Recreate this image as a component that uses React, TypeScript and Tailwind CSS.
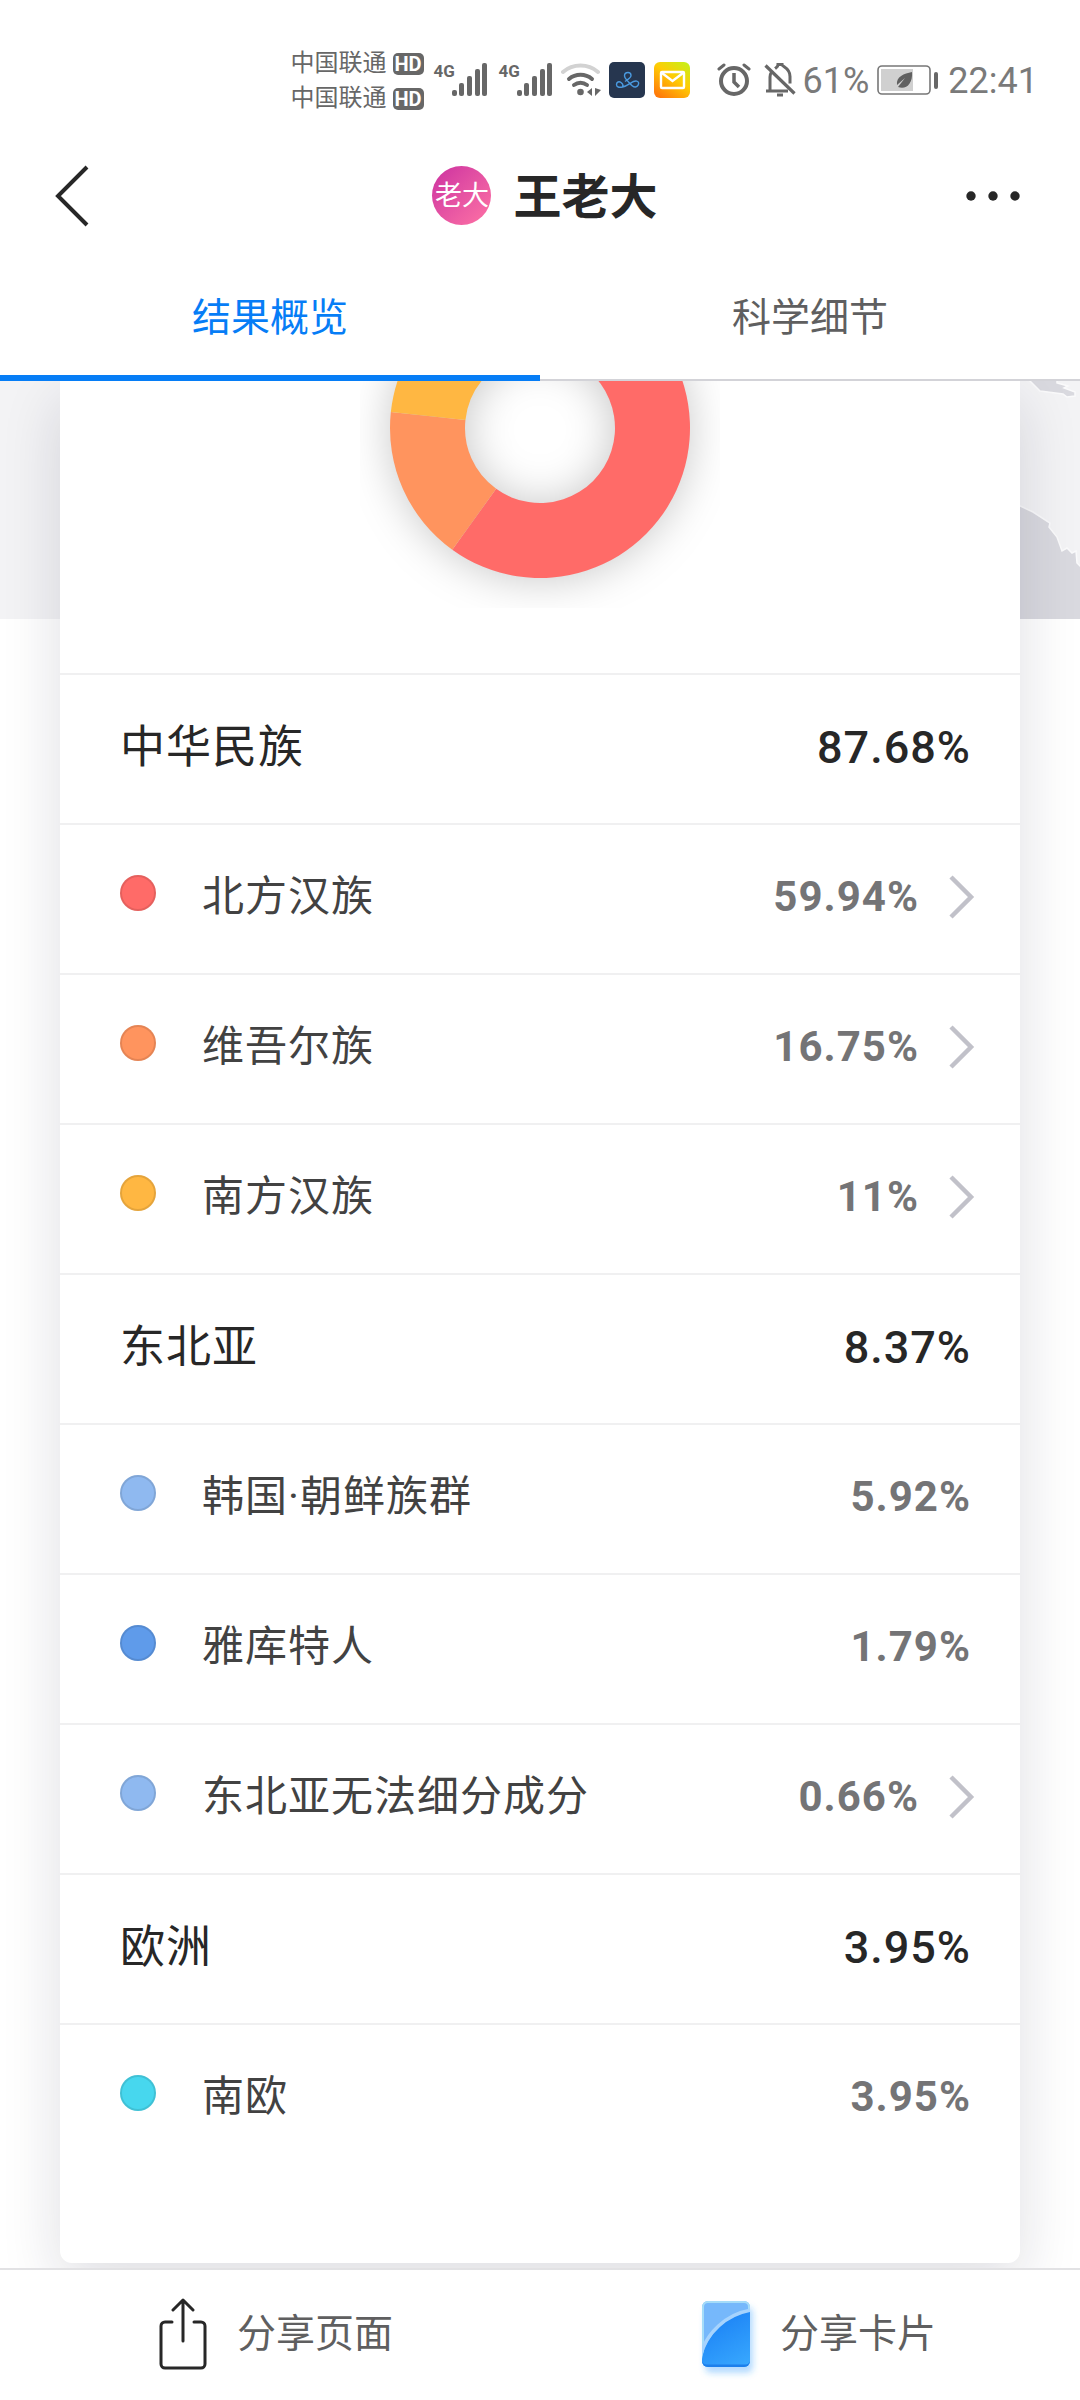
import clsx from 'clsx';

type Row = {
  name: string;
  value: number;
  color?: string;
  hasDetail?: boolean;
};

const ROWS: Row[] = [
  { name: '中华民族', value: 87.68 },
  { name: '北方汉族', value: 59.94, color: '#ff6b68', hasDetail: true },
  { name: '维吾尔族', value: 16.75, color: '#ff945e', hasDetail: true },
  { name: '南方汉族', value: 11, color: '#ffb742', hasDetail: true },
  { name: '东北亚', value: 8.37 },
  { name: '韩国·朝鲜族群', value: 5.92, color: '#8fb9f0' },
  { name: '雅库特人', value: 1.79, color: '#5f9bea' },
  { name: '东北亚无法细分成分', value: 0.66, color: '#8fb9f0', hasDetail: true },
  { name: '欧洲', value: 3.95 },
  { name: '南欧', value: 3.95, color: '#47d7ee' },
];

const OUTER = 150;
const INNER = 75;
const CENTER = 180;

function point(radius: number, share: number) {
  const angle = (share / 100) * 2 * Math.PI;
  return `${CENTER + radius * Math.sin(angle)} ${CENTER - radius * Math.cos(angle)}`;
}

function slicePath(from: number, to: number) {
  const large = to - from > 50 ? 1 : 0;
  return [
    `M${point(OUTER, from)}`,
    `A${OUTER} ${OUTER} 0 ${large} 1 ${point(OUTER, to)}`,
    `L${point(INNER, to)}`,
    `A${INNER} ${INNER} 0 ${large} 0 ${point(INNER, from)}Z`,
  ].join('');
}

function DonutChart() {
  let total = 0;
  const slices = ROWS.filter((row) => row.color).map((row) => {
    const from = total;
    total += row.value;
    return { ...row, path: slicePath(from, total) };
  });

  return (
    <svg viewBox="0 0 360 360" className="h-[360px] w-[360px] shrink-0" role="img" aria-label="祖源构成">
      <defs>
        <filter id="donut-shadow" x="-40%" y="-40%" width="180%" height="180%">
          <feGaussianBlur stdDeviation="22" />
        </filter>
      </defs>
      <circle cx="180" cy="182" r="112" fill="none" stroke="#000" strokeOpacity="0.22" strokeWidth="75" filter="url(#donut-shadow)" />
      {slices.map((slice) => (
        <path key={slice.name} d={slice.path} fill={slice.color} />
      ))}
    </svg>
  );
}

function Signal() {
  return (
    <div className="flex h-[34px] items-start">
      <span className="w-[18px] text-[17px] leading-[17px] font-bold">4G</span>
      <svg viewBox="0 0 35 34" className="h-[34px] w-[35px]" fill="currentColor">
        <rect x="0" y="27" width="5" height="6" rx="2" />
        <rect x="7" y="20" width="5" height="13" rx="2" />
        <rect x="15" y="13" width="5" height="20" rx="2" />
        <rect x="23" y="6" width="5" height="27" rx="2" />
        <rect x="30" y="0" width="5" height="33" rx="2" />
      </svg>
    </div>
  );
}

function Carrier() {
  return (
    <div className="flex h-[35px] items-center gap-[6px]">
      <span className="text-[24px] leading-[35px]">中国联通</span>
      <span className="flex h-[22px] w-[31px] items-center justify-center rounded-[5px] bg-[#676767] text-[20px] leading-[22px] font-bold text-white">
        HD
      </span>
    </div>
  );
}

function StatusBar() {
  return (
    <div className="flex h-[130px] items-center justify-end pt-[30px] pr-[42px] text-[#676767]">
      <div className="mr-[10px] pt-[2px]">
        <Carrier />
        <Carrier />
      </div>
      <div className="mr-[9px] flex gap-[12px]">
        <Signal />
        <Signal />
      </div>
      <svg viewBox="0 0 40 34" className="mr-[8px] h-[34px] w-[40px]" fill="none" stroke="currentColor" strokeWidth="4" strokeLinecap="round">
        <path d="M2 9a27 27 0 0 1 35 0" stroke="#d2d2d2" />
        <path d="M8 16a18 18 0 0 1 23 0" />
        <path d="M13 22a11 11 0 0 1 13 0" />
        <circle cx="19.5" cy="29" r="3.3" fill="currentColor" stroke="none" />
        <path d="M31 25v8l-5-4zM34 25v8l6-6z" fill="currentColor" stroke="none" />
      </svg>
      <svg viewBox="0 0 36 36" className="mr-[9px] h-[36px] w-[36px]" fill="none">
        <rect width="36" height="36" rx="5" fill="#26364f" />
        <path
          d="M16 19.500C18 18 22 16 22 13.500S20.500 10.500 19 10.500S15.500 11.500 15.500 14S18 18 20 20.500S24 25.500 26.500 25S30 22 29.500 20.500S27 18.500 24.500 19.500S18 24 13.500 25C10 25.800 7.500 25 7.500 22.500S10 19 12 20.500S14.500 23.500 13.500 25"
          stroke="#4a9ae0"
          strokeWidth="1.4"
        />
      </svg>
      <svg viewBox="0 0 36 36" className="mr-[27px] h-[36px] w-[36px]" fill="none">
        <defs>
          <linearGradient id="mail-bg" x1="0.2" y1="1" x2="0.9" y2="0">
            <stop offset="0" stopColor="#ff7a0a" />
            <stop offset="0.55" stopColor="#ffcc05" />
            <stop offset="1" stopColor="#c6f018" />
          </linearGradient>
        </defs>
        <rect width="36" height="36" rx="6" fill="url(#mail-bg)" />
        <rect x="7" y="10" width="23" height="16" rx="1" stroke="#fff" strokeWidth="2.4" />
        <path d="M8 11l10.500 8L29 11" stroke="#fff" strokeWidth="2.4" />
      </svg>
      <svg viewBox="0 0 34 34" className="mr-[13px] h-[34px] w-[34px]" fill="none" stroke="currentColor" strokeWidth="4">
        <circle cx="17" cy="18" r="13" />
        <path d="M17 10v9l5 5" strokeWidth="3.5" />
        <path d="M2 6l5-4M32 6l-5-4" strokeLinecap="round" strokeWidth="3" />
      </svg>
      <svg viewBox="0 0 32 34" className="mr-[7px] h-[34px] w-[32px]" fill="none" stroke="currentColor" strokeWidth="3">
        <path d="M2 28h22M6 27V14c0-2 .5-3.500 1.500-5M11 5.500C13 4 14 4 14 1.500h4c0 2.500 8 3 8 12v7" />
        <path d="M1.500 2.500l29 28" strokeWidth="3.2" />
        <path d="M13 32h6" />
      </svg>
      <span className="mr-[8px] pt-[2px] text-[36px] leading-[40px] text-[#7a7a7a]">61%</span>
      <svg viewBox="0 0 62 30" className="mr-[9px] h-[30px] w-[62px]" fill="none">
        <rect x="1" y="1" width="52" height="28" rx="4" stroke="#777" strokeWidth="1.6" />
        <rect x="4" y="4" width="32" height="22" fill="#d0d0d0" />
        <path d="M35 7c-8 2-16 4-15 13l8-7-7 9c8 3 15-3 14-15z" fill="#606060" />
        <rect x="57" y="7" width="4" height="17" rx="2" fill="#676767" />
      </svg>
      <span className="pt-[2px] text-[36px] leading-[40px] text-[#7a7a7a]">22:41</span>
    </div>
  );
}

function TitleBar() {
  return (
    <div className="grid h-[130px] grid-cols-[1fr_auto_1fr] items-center text-[#272727]">
      <button type="button" aria-label="返回" className="ml-[52px] w-[40px]">
        <svg viewBox="0 0 40 64" className="h-[64px] w-[40px]" fill="none" stroke="currentColor" strokeWidth="4">
          <path d="M35 4L6 33l29 29" />
        </svg>
      </button>
      <div className="flex items-center gap-[22px] pl-[10px]">
        <span className="flex h-[59px] w-[59px] items-center justify-center rounded-full bg-linear-to-br from-[#cc2ea0] to-[#ff72a4] pt-[2px] text-[27px] leading-[57px] text-white">
          老大
        </span>
        <h1 className="pt-[6px] text-[48px] leading-[60px] font-bold">王老大</h1>
      </div>
      <button type="button" aria-label="更多" className="mr-[54px] justify-self-end">
        <svg viewBox="0 0 66 40" className="h-[40px] w-[66px]" fill="currentColor">
          <circle cx="11" cy="21" r="4.7" />
          <circle cx="33" cy="21" r="4.7" />
          <circle cx="55" cy="21" r="4.7" />
        </svg>
      </button>
    </div>
  );
}

function Tabs() {
  const tabs = ['结果概览', '科学细节'];
  return (
    <div role="tablist" className="grid h-[121px] grid-cols-2">
      {tabs.map((tab, index) => (
        <button
          key={tab}
          type="button"
          role="tab"
          aria-selected={index === 0}
          className={clsx(
            'text-[39px] leading-[48px]',
            index === 0
              ? 'border-b-[6px] border-[#067df6] text-[#067df6]'
              : 'border-b-2 border-[#d3d3d8] pb-[4px] text-[#5f5f60]',
          )}
        >
          {tab}
        </button>
      ))}
    </div>
  );
}

function MapBackdrop() {
  return (
    <div className="absolute inset-x-0 top-0 flex h-[238px] justify-end bg-[#f3f3f5]">
      <svg viewBox="0 0 60 238" className="h-[238px] w-[60px]" fill="#d9d9df" stroke="#fafafb" strokeWidth="1.5">
        <path d="M8-2l12 12 23 3 4 3 8-1v-4l-11-4 4-2-11-3V-2z" />
        <path d="M-2 124l15 7 17 11-1 4 8 10 5 14 5-3 5 5 4-2 1 12 5 5v60H-2z" />
      </svg>
    </div>
  );
}

function ResultRow({ name, value, color, hasDetail }: Row) {
  if (!color) {
    return (
      <li className="flex h-[150px] items-center border-t-2 border-[#f0f0f1] pr-[49px] pb-[2px] pl-[60px] text-[45px] leading-[54px] tracking-[1px] text-[#272727]">
        <h2 className="flex-1">{name}</h2>
        <span className="font-medium">{value}%</span>
      </li>
    );
  }

  const content = (
    <>
      <span
        className="mb-[8px] h-[36px] w-[36px] rounded-full border-2 border-black/10"
        style={{ backgroundColor: color }}
      />
      <span className="ml-[46px] flex-1 text-left text-[#424242]">{name}</span>
      <span className="font-bold text-[#747476]">{value}%</span>
      {hasDetail && (
        <svg viewBox="0 0 26 44" className="ml-[30px] h-[44px] w-[26px]" fill="none" stroke="#c1c1c9" strokeWidth="4.5">
          <path d="M2 2l20 20L2 42" />
        </svg>
      )}
    </>
  );

  return (
    <li className="h-[150px] border-t-2 border-[#f0f0f1] text-[42px] leading-[54px] tracking-[1px]">
      {hasDetail ? (
        <button type="button" className="flex h-full w-full items-center pr-[45px] pb-[4px] pl-[60px] tracking-[1px]">
          {content}
        </button>
      ) : (
        <div className="flex h-full items-center pr-[49px] pb-[4px] pl-[60px]">{content}</div>
      )}
    </li>
  );
}

function ShareBar() {
  return (
    <footer className="relative grid h-[132px] grid-cols-2 border-t-2 border-[#e2e2e4] bg-white text-[39px] leading-[48px] text-[#5f5f60]">
      <button type="button" className="flex items-center justify-center gap-[30px] pb-[2px]">
        <svg viewBox="0 0 60 72" className="h-[72px] w-[60px]" fill="none" stroke="#272727" strokeWidth="3" strokeLinecap="round" strokeLinejoin="round">
          <path d="M25 24h-7a4 4 0 0 0-4 4v38a4 4 0 0 0 4 4h36a4 4 0 0 0 4-4V28a4 4 0 0 0-4-4h-7" />
          <path d="M36 43V2M26 12L36 2l10 10" />
        </svg>
        分享页面
      </button>
      <button type="button" className="flex items-center justify-center gap-[30px] pb-[2px]">
        <svg viewBox="0 0 66 66" className="h-[66px] w-[66px] overflow-visible" fill="none">
          <defs>
            <linearGradient id="card-front" x1="0.3" y1="0" x2="0.8" y2="1">
              <stop offset="0" stopColor="#1a80f5" />
              <stop offset="1" stopColor="#38a8fe" />
            </linearGradient>
            <clipPath id="card-clip">
              <rect x="18" y="0" width="48" height="66" rx="6" />
            </clipPath>
            <filter id="card-shadow" x="-30%" y="-30%" width="160%" height="160%">
              <feGaussianBlur stdDeviation="3" />
            </filter>
          </defs>
          <rect x="21" y="6" width="48" height="66" rx="6" fill="#2e97ff" fillOpacity="0.35" filter="url(#card-shadow)" />
          <g clipPath="url(#card-clip)">
            <rect x="18" width="48" height="66" fill="#76b8fb" />
            <rect x="18" width="48" height="66" rx="6" stroke="#a5dcf8" strokeWidth="4" />
            <path d="M18 58C22 34 42 14 68 10v58H18z" fill="url(#card-front)" />
            <path d="M16 56C22 32 42 13 68 9" stroke="#a6d3fd" strokeWidth="3.5" />
            <path d="M18 60c1 3 3 3.500 6 3.500h36c3 0 5-.5 6-3.500v6H18z" fill="#1c7fec" />
          </g>
        </svg>
        分享卡片
      </button>
    </footer>
  );
}

export default function App() {
  return (
    <div className="flex min-h-screen flex-col bg-white font-[Roboto,'Noto_Sans_CJK_SC',sans-serif]">
      <header>
        <StatusBar />
        <TitleBar />
        <Tabs />
      </header>
      <main className="relative flex-1 overflow-hidden px-[60px] pb-[5px]">
        <MapBackdrop />
        <section className="relative rounded-b-[12px] bg-white pb-[90px] shadow-[0_20px_60px_rgba(20,20,50,0.14)]">
          <div className="flex h-[292px] flex-col items-center justify-end overflow-hidden pb-[65px]">
            <DonutChart />
          </div>
          <ul>
            {ROWS.map((row) => (
              <ResultRow key={row.name} {...row} />
            ))}
          </ul>
        </section>
      </main>
      <ShareBar />
    </div>
  );
}
